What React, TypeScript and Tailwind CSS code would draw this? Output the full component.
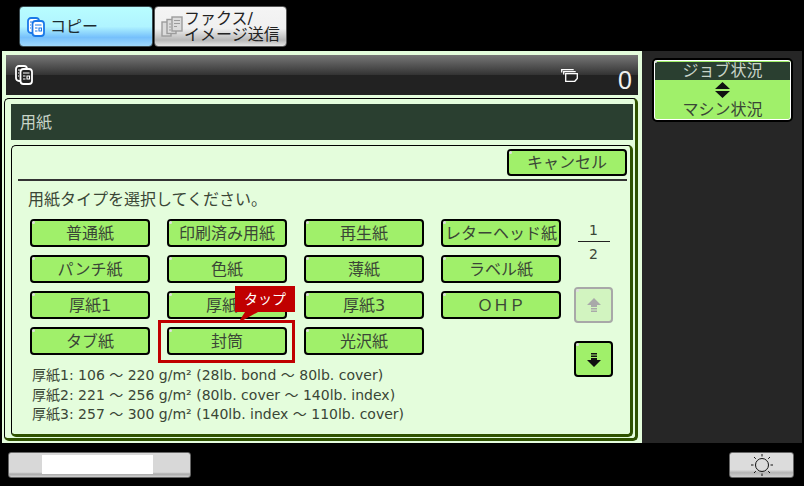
import { ReactNode } from "react";

const paperRows = [
  ["普通紙", "印刷済み用紙", "再生紙", "レターヘッド紙"],
  ["パンチ紙", "色紙", "薄紙", "ラベル紙"],
  ["厚紙1", "厚紙2", "厚紙3", "ＯＨＰ"],
  ["タブ紙", "封筒", "光沢紙", ""],
];

const weightNotes = [
  "厚紙1: 106 ～ 220 g/m² (28lb. bond ～ 80lb. cover)",
  "厚紙2: 221 ～ 256 g/m² (80lb. cover ～ 140lb. index)",
  "厚紙3: 257 ～ 300 g/m² (140lb. index ～ 110lb. cover)",
];

function Dot() {
  return <span className="absolute left-0 top-0 h-[3px] w-[3px] rounded-full bg-[#e0e0e0]" />;
}

function GreenButton({ children, className }: { children: ReactNode; className: string }) {
  return (
    <div className={`relative flex items-center justify-center rounded-[4px] border-2 border-black bg-[#a0f06a] pt-px text-[#3a4636] ${className}`}>
      <Dot />
      {children}
    </div>
  );
}

function CopyIcon({ fill, stroke, ink }: { fill: string; stroke: string; ink: string }) {
  return (
    <svg width="18" height="20" viewBox="0 0 18 20">
      <rect x="1" y="1" width="11" height="15" rx="3" fill={fill} stroke={stroke} strokeWidth="1.8" />
      <rect x="5.500" y="4" width="11.500" height="15" rx="3" fill={fill} stroke={stroke} strokeWidth="1.8" />
      <path d="M8 8h6.500M8 11h2.500M8 14h2.500M12 11h2.500v3H12zM3 5h2M3 8h1M3 11h1" stroke={ink} strokeWidth="1.1" fill="none" />
    </svg>
  );
}

function FaxIcon() {
  return (
    <svg width="22" height="21" viewBox="0 0 22 21" fill="#dcdcdc" stroke="#9c9c9c" strokeWidth="1.4">
      <rect x="1" y="6" width="9" height="14" />
      <rect x="6" y="3.500" width="9" height="14" />
      <rect x="11" y="1" width="10" height="14" />
      <path d="M13 4.500h6M13 7.500h6M13 10.500h3M8 8h2M8 11h2M8 14h2" fill="none" strokeWidth="1" />
    </svg>
  );
}

function StackIcon() {
  return (
    <svg width="17" height="13" viewBox="0 0 17 13" fill="none" stroke="white" strokeWidth="1.3">
      <path d="M.7 3.500V.7h12M2.700 5.500V2.700h12" />
      <path d="M4.700 4.700h11.600v4.800l-2.500 2.800H4.700z" />
    </svg>
  );
}

function SunIcon() {
  return (
    <svg width="22" height="22" viewBox="0 0 22 22" fill="none" stroke="#111" strokeWidth="1">
      <circle cx="11" cy="11" r="6.500" />
      <path d="M11 0v2.500M11 19.500V22M0 11h2.500M19.500 11H22M3 3l1.800 1.800M17.200 17.200 19 19M19 3l-1.800 1.800M4.800 17.200 3 19" />
    </svg>
  );
}

function PageArrow({ up, color }: { up?: boolean; color: string }) {
  return (
    <svg width="16" height="16" viewBox="0 0 16 16" fill={color}>
      {up ? (
        <path d="M8 1 15 8H11V10H5V8H1zM5 11H11V12.500H5zM5 13.500H11V15H5z" />
      ) : (
        <path d="M5 1H11V2.500H5zM5 3.500H11V5H5zM5 6H11V8H15L8 15 1 8H5z" />
      )}
    </svg>
  );
}

export default function App() {
  return (
    <div
      className="flex h-[486px] w-[804px] flex-col overflow-hidden bg-black text-[16px] text-[#3a4636]"
      style={{ fontFamily: '"DejaVu Sans", "Noto Sans CJK JP", sans-serif' }}
    >
      {/* Mode tabs */}
      <div className="flex h-[51px] gap-px pl-[19px] pt-[6px]">
        <div className="flex h-[41px] w-[134px] items-center gap-[5px] rounded-[4px] border border-[#3a4a50] bg-[linear-gradient(#b8fdff_0%,#b0f4ff_50%,#76c0fb_78%,#9fd8fc_100%)] pl-[7px] text-[#1c2a30]">
          <CopyIcon fill="#ffffff" stroke="#1a78e8" ink="#1a78e8" />
          <span>コピー</span>
        </div>
        <div className="flex h-[41px] w-[133px] items-center gap-px rounded-[4px] border border-[#555] bg-[linear-gradient(#f4f4f4_0%,#f0f0f0_55%,#b8b8b8_85%,#e4e4e4_100%)] pl-[6px] text-[#222]">
          <FaxIcon />
          <span className="whitespace-pre leading-[16px]">{"ファクス/\nイメージ送信"}</span>
        </div>
      </div>

      <div className="flex h-[392px]">
        {/* Main panel */}
        <div className="ml-[2px] flex w-[640px] flex-col bg-[#e4fddc] pb-[2px] pr-1 pt-1">
          <div className="ml-1 flex h-[40px] shrink-0 items-center bg-[linear-gradient(#777_0%,#333_50%,#222_50%,#222_100%)] pl-[9px] text-white">
            <CopyIcon fill="#222222" stroke="#ffffff" ink="#ffffff" />
            <div className="flex-1" />
            <StackIcon />
            <span
              className="ml-[40px] mr-[6px] mt-[10px] text-[25px] leading-none text-[#f0f0f0]"
              style={{ fontFamily: '"Liberation Sans", sans-serif' }}
            >
              0
            </span>
          </div>

          <div className="ml-[2px] mt-[3px] flex flex-1 flex-col rounded-[5px] border-t border-l border-black border-r-[3px] border-b-[3px] border-r-[#2f5200] border-b-[#2f5200] pb-px pl-[6px] pr-[2px] pt-[5px]">
            <div className="flex h-[36px] shrink-0 items-center bg-[#2a3f30] pl-[9px] pt-px text-[#c8d4c8]">用紙</div>

            <div className="relative mt-[5px] flex flex-1 flex-col rounded-[5px] border-t border-l border-black border-r-[3px] border-b-[3px] border-r-[#2f5200] border-b-[#2f5200] pl-[6px] pr-[3px]">
              <div className="flex justify-end pt-[3px]">
                <GreenButton className="h-[27px] w-[120px]">キャンセル</GreenButton>
              </div>
              <div className="mt-[3px] h-[2px] bg-[#333]" />
              <p className="ml-[10px] mt-[9px] h-[20px] leading-[20px]">用紙タイプを選択してください。</p>

              <div className="ml-[12px] mt-[9px] flex">
                <div className="flex flex-col">
                  <div className="flex flex-col gap-2">
                    {paperRows.map((row, i) => (
                      <div key={i} className="flex gap-[17px]">
                        {row.map((label, j) =>
                          label ? (
                            <GreenButton key={j} className="h-[28px] w-[120px] whitespace-nowrap">
                              {label}
                            </GreenButton>
                          ) : (
                            <div key={j} className="w-[120px]" />
                          ),
                        )}
                      </div>
                    ))}
                  </div>
                  <div className="ml-[2px] mt-[11px] text-[14px] leading-[19.500px]">
                    {weightNotes.map((note) => (
                      <div key={note} className="whitespace-nowrap">{note}</div>
                    ))}
                  </div>
                </div>

                {/* Page control */}
                <div className="ml-[13px] flex w-[39px] flex-col items-center">
                  <div className="flex w-[32px] flex-col items-center text-[14px]">
                    <span className="h-[23px] w-full border-b border-[#222] text-center leading-[22px]">1</span>
                    <span className="leading-[24px]">2</span>
                  </div>
                  <div className="relative mt-[21px] flex h-[36px] w-[39px] items-center justify-center rounded-[4px] border-2 border-[#a8a8a8] bg-[#d2f4c0]">
                    <Dot />
                    <PageArrow up color="#a9a9a9" />
                  </div>
                  <GreenButton className="mt-[18px] h-[36px] w-[39px]">
                    <PageArrow color="#111" />
                  </GreenButton>
                </div>
              </div>

              {/* Tap highlight */}
              <div className="absolute left-[146px] top-[174px] h-[43px] w-[137px] border-[3px] border-[#c00000]" />
              <div className="absolute left-[223px] top-[140px] flex h-[26px] w-[60px] items-center justify-center bg-[#c00000] text-[14px] text-white">
                タップ
              </div>
              <svg className="absolute left-[226px] top-[166px]" width="20" height="12" viewBox="0 0 20 12">
                <path d="M7 0H20L0 11z" fill="#c00000" />
              </svg>
            </div>
          </div>
        </div>

        {/* Status side */}
        <div className="mr-[2px] flex-1 bg-[#262626] pl-[10px] pt-[7px]">
          <div className="relative flex h-[64px] w-[141px] flex-col overflow-hidden rounded-[5px] border-2 border-black bg-[#a0f06a] text-center leading-[18px] shadow-[inset_0_0_0_1px_#fff]">
            <Dot />
            <div className="mx-px mt-[2px] h-[18px] bg-[#2a3f30] text-[#c8d4c8]">ジョブ状況</div>
            <svg className="mx-auto mt-[2px] shrink-0" width="15" height="16" viewBox="0 0 15 16" fill="#111">
              <path d="M7.500 0 15 7H0zM0 9H15L7.500 16z" />
            </svg>
            <div className="mt-[3px] text-[#3a4636]">マシン状況</div>
          </div>
        </div>
      </div>

      {/* Bottom bar */}
      <div className="flex flex-1 items-start justify-between pl-2 pr-[10px] pt-[9px]">
        <div className="flex h-[26px] w-[183px] justify-center rounded-[3px] border border-[#666] bg-[linear-gradient(#d8d8d8_0%,#d8d8d8_80%,#aaa_88%,#d0d0d0_100%)] pt-[2px]">
          <div className="ml-[-4px] h-[19px] w-[111px] bg-white" />
        </div>
        <div className="flex h-[26px] w-[65px] items-center justify-center rounded-[3px] border border-[#666] bg-[linear-gradient(#dcdcdc_0%,#dcdcdc_70%,#b4b4b4_82%,#d0d0d0_100%)]">
          <SunIcon />
        </div>
      </div>
    </div>
  );
}
